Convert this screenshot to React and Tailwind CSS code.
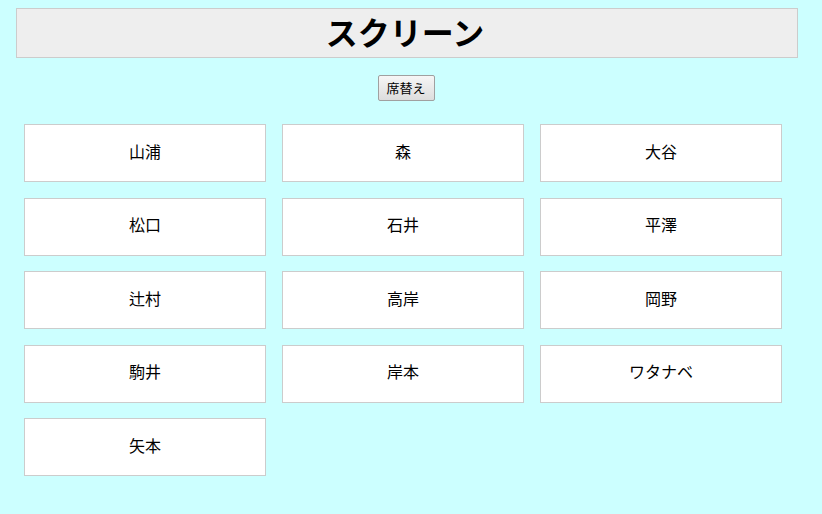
import React, { useState } from "react";

const initialSeats = [
  "山浦", "森", "大谷",
  "松口", "石井", "平澤",
  "辻村", "高岸", "岡野",
  "駒井", "岸本", "ワタナベ",
  "矢本",
];

const App = () => {
  const [seats, setSeats] = useState(initialSeats);

  const shuffle = () => {
    const next = [...seats];
    for (let i = next.length - 1; i > 0; i--) {
      const j = Math.floor(Math.random() * (i + 1));
      [next[i], next[j]] = [next[j], next[i]];
    }
    setSeats(next);
  };

  return (
    <div
      className="min-h-screen bg-[#ccffff] text-black pt-2"
      style={{ fontFamily: '"Noto Sans CJK JP", "Noto Sans", sans-serif' }}
    >
      {/* Screen */}
      <div className="ml-4 w-[782px] h-[50px] bg-[#eeeeee] border border-[#cccccc] flex items-center justify-center pb-[5px] pr-[4px]">
        <h1 className="text-[32px] font-bold leading-none">スクリーン</h1>
      </div>

      <div className="flex justify-center mt-[17px] pr-[10px]">
        <button
          onClick={shuffle}
          className="w-[57px] h-[26px] text-[13px] leading-none border border-[#a0a0a0] rounded-[2px] bg-gradient-to-b from-[#f6f6f6] to-[#dddddd] pb-[2px]"
        >
          席替え
        </button>
      </div>

      {/* Seats */}
      <div className="ml-6 mt-[23px] grid grid-cols-[repeat(3,242px)] gap-x-4 gap-y-[15.5px] w-fit">
        {seats.map((name) => (
          <div
            key={name}
            className="h-[58px] bg-white border border-[#cccccc] flex items-center justify-center text-[16px] pb-[5px]"
          >
            {name}
          </div>
        ))}
      </div>
    </div>
  );
};

export default App;
